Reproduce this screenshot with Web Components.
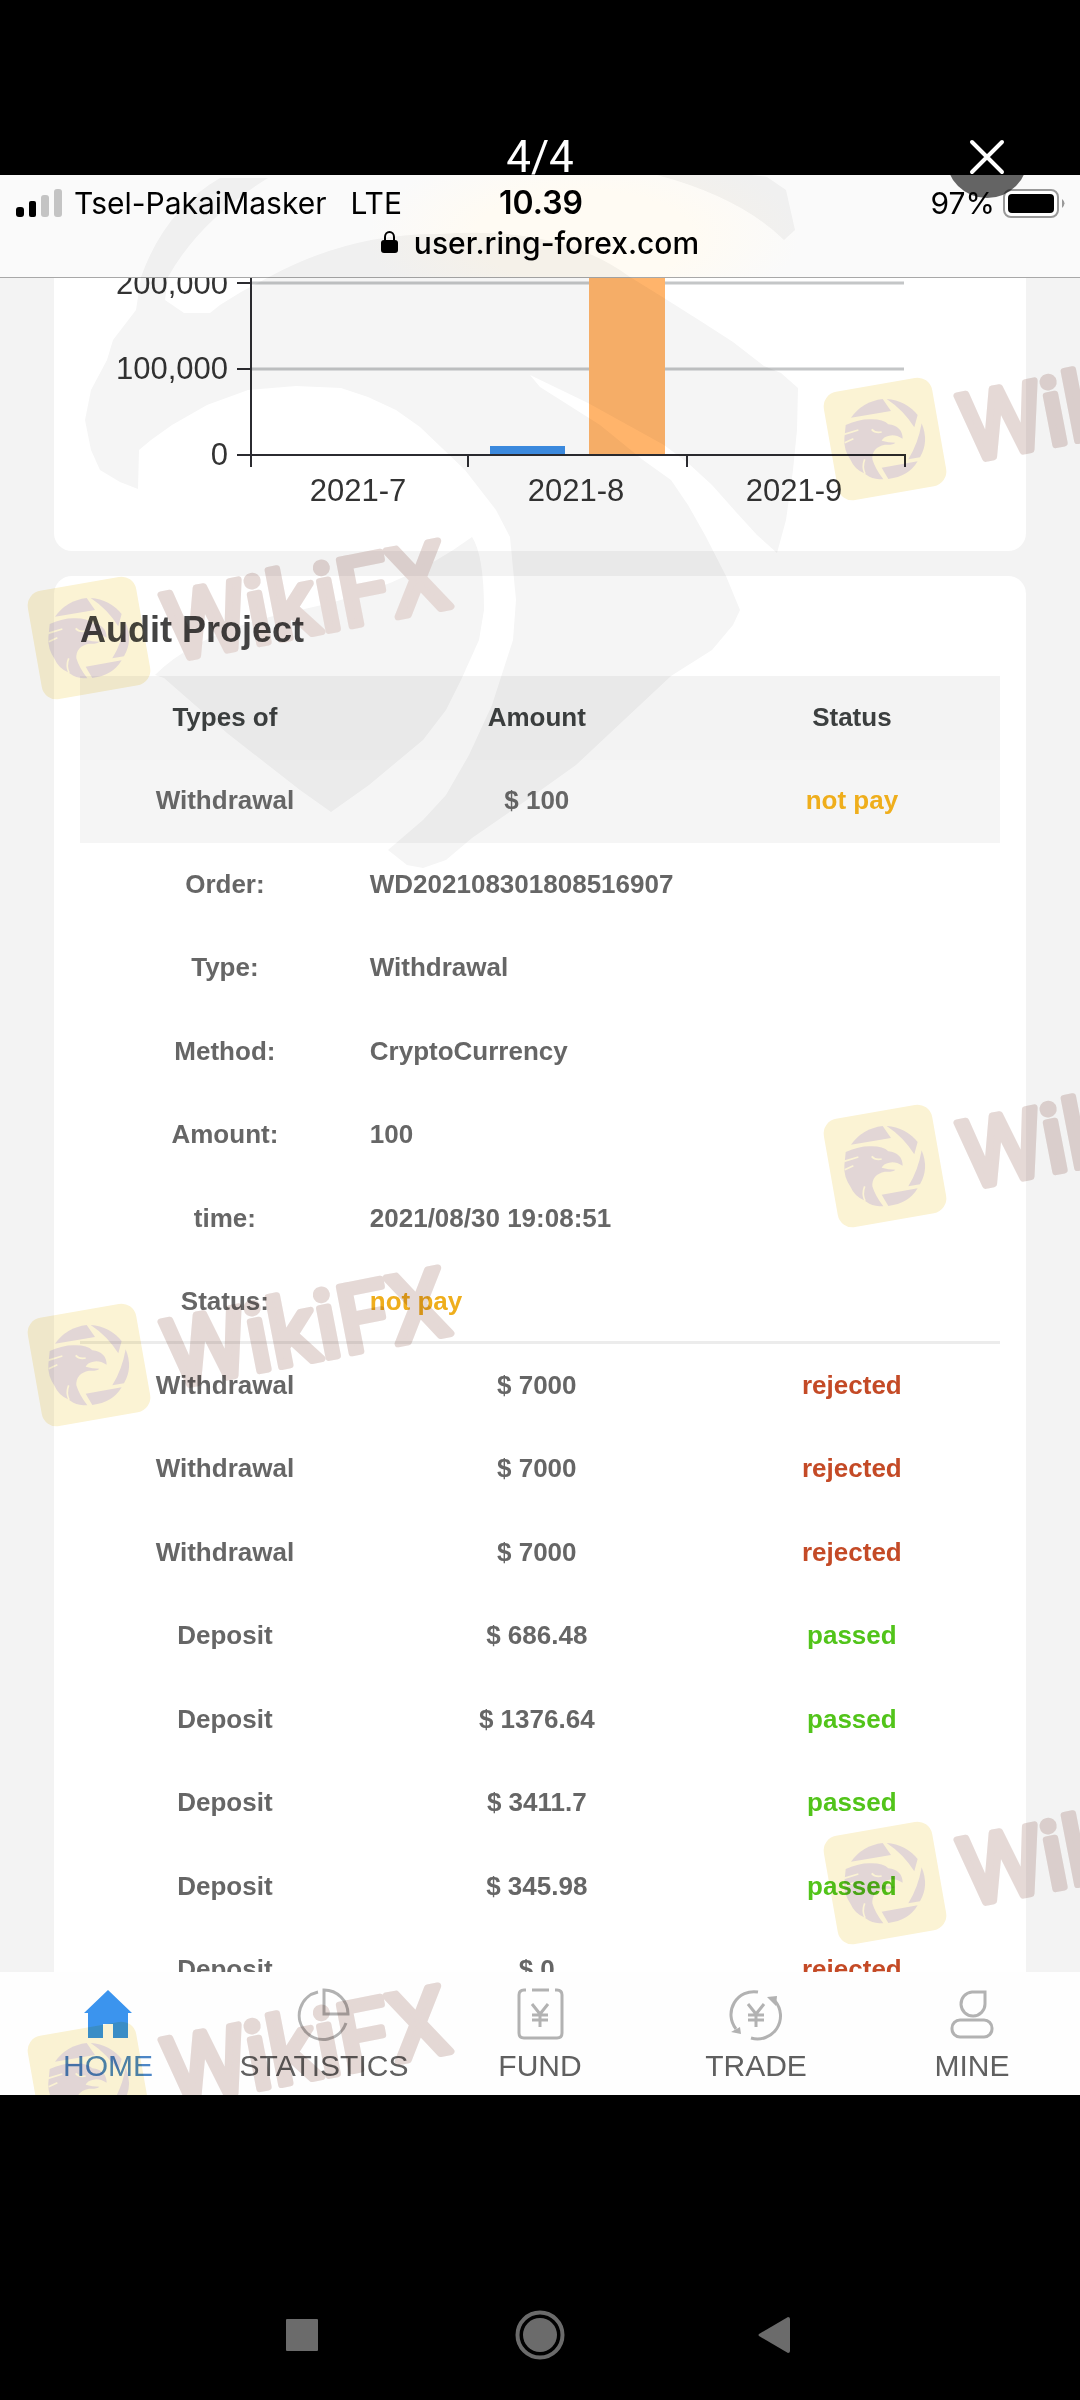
<!DOCTYPE html>
<html lang="en">
<head>
<meta charset="utf-8">
<meta name="viewport" content="width=device-width, initial-scale=1">
<title>Audit Project</title>
<style>
  body {
    margin: 0;
    background: #000;
    font-family: "Liberation Sans", Arial, sans-serif;
  }
</style>
</head>
<body>
<photo-viewer>
  <viewer-bar slot="top">4/4</viewer-bar>
  <web-shot>
    <phone-status slot="head" carrier="Tsel-PakaiMasker" network="LTE" time="10.39" battery="97%">user.ring-forex.com</phone-status>
    <info-card class="chart"><bar-chart></bar-chart></info-card>
    <info-card><audit-table>Audit Project</audit-table></info-card>
    <tab-bar slot="foot">
      <tab-item icon="home" active>HOME</tab-item>
      <tab-item icon="statistics">STATISTICS</tab-item>
      <tab-item icon="fund">FUND</tab-item>
      <tab-item icon="trade">TRADE</tab-item>
      <tab-item icon="mine">MINE</tab-item>
    </tab-bar>
  </web-shot>
  <system-nav slot="bottom"></system-nav>
</photo-viewer>

<script>
class BaseElement extends HTMLElement {
  constructor() {
    super();
    this.attachShadow({ mode: "open" });
  }
  connectedCallback() {
    this.shadowRoot.innerHTML = this.render();
  }
}

class PhotoViewer extends BaseElement {
  render() {
    return `
      <style>
        :host {
          display: flex;
          flex-direction: column;
          height: 100vh;
          overflow: hidden;
        }
        main {
          flex: 1;
          min-height: 0;
          display: flex;
        }
      </style>
      <slot name="top"></slot>
      <main><slot></slot></main>
      <slot name="bottom"></slot>
    `;
  }
}

class ViewerBar extends BaseElement {
  render() {
    return `
      <style>
        :host {
          display: grid;
          grid-template-columns: 1fr auto 1fr;
          align-items: center;
          padding: 116px 52px 0;
          /* the round close button hangs over the photo */
          margin-bottom: -23px;
          position: relative;
          z-index: 2;
          color: #fff;
          font: 44px/82px Roboto, sans-serif;
        }
        span { grid-column: 2; }
        button {
          justify-self: end;
          width: 82px;
          height: 82px;
          padding: 0;
          border: 0;
          border-radius: 50%;
          background: rgba(0, 0, 0, .6);
        }
        svg { display: block; }
      </style>
      <span><slot></slot></span>
      <button aria-label="Close">
        <svg width="82" height="82" viewBox="0 0 82 82" stroke="#fff" stroke-width="4" stroke-linecap="round">
          <path d="M26 26 56 56M56 26 26 56"/>
        </svg>
      </button>
    `;
  }
}

class WebShot extends BaseElement {
  render() {
    return `
      <style>
        :host {
          flex: 1;
          min-width: 0;
          display: flex;
          flex-direction: column;
          position: relative;
          overflow: hidden;
          background: #f3f3f3;
        }
        section {
          flex: 1;
          min-height: 0;
          overflow: hidden;
          display: flex;
          flex-direction: column;
          gap: 25px;
          padding: 0 5%;
        }
      </style>
      <slot name="head"></slot>
      <section><slot></slot></section>
      <slot name="foot"></slot>
      <water-mark></water-mark>
    `;
  }
}

class PhoneStatus extends BaseElement {
  render() {
    const get = name => this.getAttribute(name);
    return `
      <style>
        :host {
          display: block;
          border-bottom: 1px solid #a8a8a8;
          background: radial-gradient(ellipse 20% 90% at 54% 60%, #fffbf3, #fffbf3 50%, #fafafa);
          color: #000;
          font: 30px/36px Inter, sans-serif;
        }
        .row {
          display: grid;
          grid-template-columns: 1fr auto 1fr;
          align-items: center;
          height: 34px;
          padding: 10px 14px 0 16px;
        }
        .left, .right, .url { display: flex; align-items: center; }
        .left { gap: 12px; }
        .net { margin-left: 12px; }
        .right { justify-content: flex-end; gap: 8px; }
        b { font-size: 32px; font-weight: 600; }
        .url {
          justify-content: center;
          gap: 16px;
          height: 58px;
          line-height: 48px;
          align-items: flex-start;
          font-weight: 500;
        }
        .url svg { margin-top: 11px; }
        svg { display: block; }
      </style>
      <div class="row">
        <div class="left">
          <svg width="46" height="30" viewBox="0 0 46 30">
            <rect y="19" width="8" height="10" rx="3"/>
            <rect x="13" y="13" width="7" height="16" rx="2"/>
            <rect x="25" y="7" width="8" height="22" rx="3" fill="#c4c4c4"/>
            <rect x="38" y="1" width="8" height="28" rx="3" fill="#c4c4c4"/>
          </svg>
          <span>${get("carrier")}</span>
          <span class="net">${get("network")}</span>
        </div>
        <b>${get("time")}</b>
        <div class="right">
          <span>${get("battery")}</span>
          <svg width="63" height="30" viewBox="0 0 63 30">
            <rect x="1" y="2" width="54" height="27" rx="7" fill="#fff" stroke="#999" stroke-width="2"/>
            <rect x="5" y="6" width="46" height="19" rx="4"/>
            <path d="M59 11q5 4 0 9z" fill="#999"/>
          </svg>
        </div>
      </div>
      <div class="url">
        <svg width="17" height="24" viewBox="0 0 17 24">
          <path d="M4 11V7a4.500 5 0 0 1 9 0v4" fill="none" stroke="#000" stroke-width="2"/>
          <rect y="10" width="17" height="13" rx="3"/>
        </svg>
        <slot></slot>
      </div>
    `;
  }
}

class InfoCard extends BaseElement {
  render() {
    return `
      <style>
        :host {
          display: block;
          flex: none;
          border-radius: 18px;
          background: #fff;
        }
        :host(.chart) {
          border-top-left-radius: 0;
          border-top-right-radius: 0;
        }
      </style>
      <slot></slot>
    `;
  }
}

class BarChart extends BaseElement {
  render() {
    const months = ["2021-7", "2021-8", "2021-9"];
    const levels = [["200,000", 6], ["100,000", 91], ["0", 177]];
    return `
      <style>
        :host { display: block; }
        svg { display: block; width: 100%; }
        text { font-size: 31px; fill: #333; }
      </style>
      <svg viewBox="0 0 972 273" role="img" aria-label="Amount by month">
        <path d="M197 5H850M197 91H850" stroke="#c4c6c7" stroke-width="3"/>
        <rect x="436" y="168" width="75" height="9" fill="#3d8fe6"/>
        <rect x="535" y="0" width="76" height="177" fill="#ffb46b"/>
        <path d="M197 0V189M183 177H851M183 5h14M183 91h14M414 177v12M633 177v12M851 176v13" fill="none" stroke="#2b2b30" stroke-width="2"/>
        ${levels.map(([label, y]) => `<text x="174" y="${y + 10}" text-anchor="end">${label}</text>`).join("")}
        ${months.map((label, i) => `<text x="${304 + i * 218}" y="223" text-anchor="middle">${label}</text>`).join("")}
      </svg>
    `;
  }
}

class AuditTable extends BaseElement {
  render() {
    const detail = [
      ["Order:", "WD202108301808516907"],
      ["Type:", "Withdrawal"],
      ["Method:", "CryptoCurrency"],
      ["Amount:", "100"],
      ["time:", "2021/08/30 19:08:51"],
      ["Status:", "not pay", "wait"]
    ];
    const rows = [
      ["Withdrawal", "$ 7000", "rejected"],
      ["Withdrawal", "$ 7000", "rejected"],
      ["Withdrawal", "$ 7000", "rejected"],
      ["Deposit", "$ 686.48", "passed"],
      ["Deposit", "$ 1376.64", "passed"],
      ["Deposit", "$ 3411.7", "passed"],
      ["Deposit", "$ 345.98", "passed"],
      ["Deposit", "$ 0", "rejected"]
    ];
    return `
      <style>
        :host { display: block; padding: 8px 26px 0; }
        h2 {
          margin: 0;
          font-size: 36px;
          line-height: 92px;
          color: #444;
        }
        table {
          width: 100%;
          table-layout: fixed;
          border-collapse: collapse;
          font-size: 26px;
          font-weight: bold;
          color: #666;
        }
        th, td {
          box-sizing: border-box;
          height: 83px;
          padding: 0 0 2px;
          text-align: center;
        }
        tr.tall > * { height: 84px; }
        .head { background: #f3f3f3; color: #3c3f3f; }
        .open { background: #f5f5f5; }
        td.value { text-align: left; }
        .last > * { box-shadow: inset 0 -3px #ececec; }
        .wait { color: #efae1c; }
        .rejected { color: #c44a26; }
        .passed { color: #52c41a; }
      </style>
      <h2><slot></slot></h2>
      <table>
        <colgroup><col style="width:31.5%"><col style="width:36.3%"><col></colgroup>
        <tr class="head tall"><th>Types of</th><th>Amount</th><th>Status</th></tr>
        <tr class="open"><td>Withdrawal</td><td>$ 100</td><td class="wait">not pay</td></tr>
        ${detail.map(([label, value, state = ""], i) => `
          <tr class="${i % 2 ? "" : "tall"} ${i === detail.length - 1 ? "last" : ""}">
            <th>${label}</th><td colspan="2" class="value ${state}">${value}</td>
          </tr>`).join("")}
        ${rows.map(([type, amount, state], i) => `
          <tr class="${i % 2 ? "" : "tall"}">
            <td>${type}</td><td>${amount}</td><td class="${state}">${state}</td>
          </tr>`).join("")}
      </table>
    `;
  }
}

class TabBar extends BaseElement {
  render() {
    return `
      <style>
        :host {
          display: grid;
          grid-auto-flow: column;
          grid-auto-columns: 1fr;
          height: 123px;
          background: #fefefe;
        }
      </style>
      <slot></slot>
    `;
  }
}

const yen = `<path d="M17 15l8 10 8-10M17 26h16M17 31h16M25 25v13"/>`;
const icons = {
  home: `<path d="M25 1 1 24h4v25h15V35h10v14h15V24h4z" fill="currentColor" stroke="none"/>`,
  statistics: `<path d="M19 3A24 24 0 1 0 47 34M25 1V25H49A24 24 0 0 0 25 1z"/>`,
  fund: `<path d="M11 1H9Q4 1 4 6V44Q4 49 9 49H42Q47 49 47 44V6Q47 1 42 1H40M17 1H34"/>${yen}`,
  trade: `<path d="M27 3A23 23 0 0 0 5 40M20 49A23 23 0 0 0 44 12"/><path d="M0 43 9 38 10 45zM36 8 46 7 45 17z" fill="currentColor" stroke="none"/>${yen}`,
  mine: `<path d="M38 3H25A12 12 0 1 0 38 15z"/><rect x="5" y="31" width="40" height="17" rx="8"/>`
};

class TabItem extends BaseElement {
  render() {
    return `
      <style>
        :host { display: block; min-width: 0; color: #b2b2b2; }
        :host([active]) { color: #3b94ee; }
        a {
          display: flex;
          flex-direction: column;
          align-items: center;
          gap: 10px;
          padding-top: 17px;
          color: inherit;
          text-decoration: none;
          font-size: 30px;
          line-height: 34px;
        }
        span { color: #606060; }
        :host([active]) span { color: #4c86c6; }
        svg { display: block; overflow: visible; fill: none; stroke: currentColor; stroke-width: 3; }
      </style>
      <a href="#${this.getAttribute("icon")}">
        <svg width="50" height="50" viewBox="0 0 50 50">${icons[this.getAttribute("icon")]}</svg>
        <span><slot></slot></span>
      </a>
    `;
  }
}

class WaterMark extends BaseElement {
  render() {
    const marks = [[89, 463], [885, 264], [89, 1190], [885, 991], [89, 1908], [885, 1708]];
    return `
      <style>
        :host {
          position: absolute;
          inset: 0;
          pointer-events: none;
          mix-blend-mode: multiply;
        }
        svg { display: block; width: 100%; }
        text {
          font-family: Roboto, sans-serif;
          font-size: 94px;
          fill: #e5d9d6;
          stroke: #e5d9d6;
          stroke-width: 7px;
          stroke-linejoin: round;
        }
      </style>
      <svg viewBox="0 0 1080 1920" aria-hidden="true">
        <defs>
          <g id="mark">
            <rect x="-55" y="-55" width="110" height="110" rx="15" fill="#fbf3d4" transform="rotate(-10)"/>
            <g transform="scale(.333) translate(-315 -257)" fill="#e2d6d6">
              <path d="M213 193Q247 145 308 137L333 173z"/>
              <path d="M320 137Q378 142 413 185L403 222Q370 170 320 137z"/>
              <path d="M425 210Q448 265 420 312L385 318Q415 270 425 210z"/>
              <path d="M305 343 413 324Q386 370 325 377z"/>
              <path d="M197 215Q240 196 275 198 310 198 325 213 367 218 368 256 345 242 328 247 310 250 305 262 325 268 346 268 338 276 315 274 275 282 277 318 286 348 310 378 285 378 268 370L252 360Q222 345 213 322 190 290 193 255z"/>
              <path d="M192 243 235 230M194 268 220 256M255 362Q245 340 254 318M275 228Q285 240 305 236" fill="none" stroke="#fbf3d4" stroke-width="5"/>
            </g>
            <text transform="translate(82 23) rotate(-11)">WikiFX</text>
          </g>
        </defs>
        <g fill="#f5f5f5">
          <path d="M220 3H268Q200 45 168 102L165 125 184 138H210L220 130 241 117 269 102Q350 58 440 59 560 50 630 102L664 123 702 147 733 167 764 191 781 198 798 213 797 255 793 295 786 345 777 378 757 360 736 337 712 310 688 288 664 270 588 228 530 200 540 212 600 250 643 285 671 305 688 330 705 360 726 401 740 435 733 450 712 475 671 501 640 530 576 590 534 620 472 663 446 685 423 693 407 690 388 675 423 645 446 620 469 580 492 530 513 465 516 425 510 362 496 335 465 295 420 252 396 235 368 222 341 213 296 211 248 215 207 230 172 250 151 265 139 275 138 314 120 307 100 295 91 275 85 245 91 215 107 185 113 165 136 135 141 102Q165 35 220 3z"/>
          <path d="M472 362Q484 380 484 435L479 465 461 505 446 535 423 565 369 610 331 637 300 615 227 558 164 503 155 500Q200 455 300 435 400 415 472 362z"/>
          <path d="M657 0Q720-5 767 2L786 15 795 55 784 65Q740 22 657 0z"/>
        </g>
        ${marks.map(([x, y]) => `<use href="#mark" x="${x}" y="${y}"/>`).join("")}
      </svg>
    `;
  }
}

class SystemNav extends BaseElement {
  render() {
    return `
      <style>
        :host {
          display: grid;
          grid-template-columns: repeat(3, 1fr);
          justify-items: center;
          padding: 215px 17% 40px;
          background: #000;
        }
        button { padding: 0; border: 0; background: none; }
        svg { display: block; fill: #6b6b6b; }
      </style>
      <button aria-label="Recent apps">
        <svg width="50" height="50" viewBox="0 0 50 50"><rect x="9" y="9" width="32" height="32" rx="1"/></svg>
      </button>
      <button aria-label="Home">
        <svg width="50" height="50" viewBox="0 0 50 50">
          <circle cx="25" cy="25" r="17"/>
          <circle cx="25" cy="25" r="22.500" fill="none" stroke="#6b6b6b" stroke-width="4"/>
        </svg>
      </button>
      <button aria-label="Back">
        <svg width="50" height="50" viewBox="0 0 50 50"><path d="M6 24 35 7q2 0 2 2v32q0 2-2 2L6 26q-1-1 0-2z"/></svg>
      </button>
    `;
  }
}

customElements.define("photo-viewer", PhotoViewer);
customElements.define("viewer-bar", ViewerBar);
customElements.define("web-shot", WebShot);
customElements.define("phone-status", PhoneStatus);
customElements.define("info-card", InfoCard);
customElements.define("bar-chart", BarChart);
customElements.define("audit-table", AuditTable);
customElements.define("tab-bar", TabBar);
customElements.define("tab-item", TabItem);
customElements.define("water-mark", WaterMark);
customElements.define("system-nav", SystemNav);
</script>
</body>
</html>
